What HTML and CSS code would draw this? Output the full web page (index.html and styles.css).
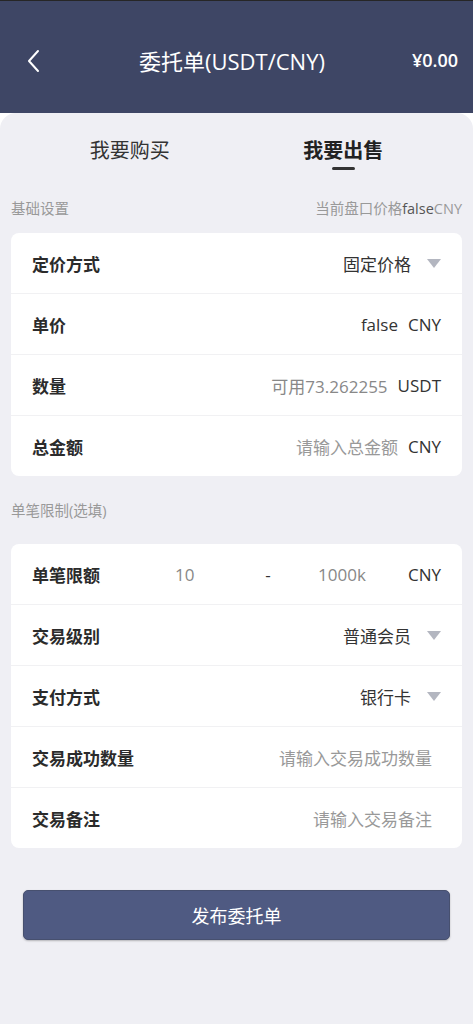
FILE: index.html
```html
<!DOCTYPE html>
<html lang="zh-CN">
<head>
<meta charset="utf-8">
<title>委托单</title>
<link rel="stylesheet" href="styles.css">
</head>
<body>
<header class="topbar">
  <span class="back">
    <svg width="14" height="24" viewBox="0 0 14 24"><path d="M12 2 L3 12 L12 22" fill="none" stroke="#fff" stroke-width="2" stroke-linecap="round" stroke-linejoin="round"/></svg>
  </span>
  <h1 class="title">委托单(USDT/CNY)</h1>
  <span class="balance">¥0.00</span>
</header>
<main class="main">
  <nav class="tabs">
    <div class="tab">我要购买</div>
    <div class="tab active">我要出售<span class="bar"></span></div>
  </nav>

  <div class="sec-head first">
    <span>基础设置</span>
    <span>当前盘口价格<b class="dark">false</b>CNY</span>
  </div>
  <section class="card">
    <div class="row">
      <span class="label">定价方式</span>
      <span class="val dark">固定价格</span><span class="tri"></span>
    </div>
    <div class="row">
      <span class="label">单价</span>
      <span class="val dark">false</span><span class="unit">CNY</span>
    </div>
    <div class="row">
      <span class="label">数量</span>
      <span class="val muted">可用73.262255</span><span class="unit">USDT</span>
    </div>
    <div class="row">
      <span class="label">总金额</span>
      <span class="val ph">请输入总金额</span><span class="unit">CNY</span>
    </div>
  </section>

  <div class="sec-head second">
    <span>单笔限制(选填)</span>
  </div>
  <section class="card">
    <div class="row">
      <span class="label wide">单笔限额</span>
      <span class="lim muted">10</span>
      <span class="dash">-</span>
      <span class="lim lim2 muted">1000k</span>
      <span class="unit push">CNY</span>
    </div>
    <div class="row">
      <span class="label">交易级别</span>
      <span class="val dark">普通会员</span><span class="tri"></span>
    </div>
    <div class="row">
      <span class="label">支付方式</span>
      <span class="val dark">银行卡</span><span class="tri"></span>
    </div>
    <div class="row">
      <span class="label">交易成功数量</span>
      <span class="val ph inset">请输入交易成功数量</span>
    </div>
    <div class="row">
      <span class="label">交易备注</span>
      <span class="val ph inset">请输入交易备注</span>
    </div>
  </section>

  <button class="submit">发布委托单</button>
</main>
</body>
</html>
```

FILE: styles.css
```css
* { box-sizing: border-box; }
html, body { margin: 0; padding: 0; }
body {
  background: #ffffff;
  font-family: "Open Sans", "Noto Sans CJK SC", sans-serif;
  color: #333;
  width: 473px;
}
.topbar {
  height: 113px;
  background: #3e4665;
  border-top: 1px solid #262626;
  display: flex;
  align-items: center;
  padding: 0 15px 0 26px;
  color: #fff;
}
.back { display: flex; width: 14px; height: 24px; margin-top: 7px; }
.title {
  flex: 1;
  text-align: center;
  margin: 6px 0 0 0;
  font-size: 22px;
  font-weight: 400;
  padding-left: 12px;
}
.balance {
  font-size: 18px;
  font-weight: 600;
  margin-top: 6px;
}
.main {
  background: #efeff4;
  border-radius: 16px 16px 0 0;
  padding: 0 11px 85px;
  min-height: 910px;
}
.tabs {
  display: flex;
  padding: 0 12px;
  height: 76px;
}
.tab {
  flex: 1;
  display: flex;
  flex-direction: column;
  align-items: center;
  padding-top: 24px;
  font-size: 20px;
  line-height: 28px;
  color: #333;
}
.tab.active { font-weight: 700; color: #222; }
.bar {
  width: 23px;
  height: 3px;
  border-radius: 2px;
  background: #333;
  margin-top: 2px;
}
.sec-head {
  display: flex;
  justify-content: space-between;
  font-size: 14.5px;
  line-height: 20px;
  color: #999;
}
.sec-head .dark { font-weight: 400; color: #555; }
.sec-head.first { padding: 10px 0 14px; }
.sec-head.second { padding: 25px 0 23px; }
.card {
  background: #fff;
  border-radius: 8px;
}
.row {
  height: 61px;
  display: flex;
  align-items: center;
  padding: 0 21px;
  border-bottom: 1px solid #f1f1f3;
  font-size: 17px;
}
.row:last-child { border-bottom: 0; height: 60px; }
.label {
  font-weight: 700;
  color: #2b2b2b;
  margin-right: auto;
}
.label.wide { width: 143px; margin-right: 0; }
.dark { color: #333; }
.muted { color: #888; }
.ph { color: #999; }
.inset { margin-right: 9px; }
.unit { color: #333; margin-left: 10px; }
.unit.push { margin-left: auto; }
.tri {
  width: 0;
  height: 0;
  border-left: 7px solid transparent;
  border-right: 7px solid transparent;
  border-top: 9px solid #b3b6c0;
  margin-left: 16px;
}
.lim { width: 85px; }
.lim2 { margin-left: 42px; }
.dash { width: 16px; text-align: center; color: #333; }
.submit {
  display: block;
  width: 427px;
  height: 50px;
  margin: 42px 0 0 12px;
  background: #4f5a82;
  border: 1px solid #47506f;
  border-radius: 5px;
  box-shadow: 0 1px 2px rgba(0,0,0,0.25);
  color: #fff;
  font-family: "Noto Sans CJK SC", sans-serif;
  font-size: 18px;
}
```
